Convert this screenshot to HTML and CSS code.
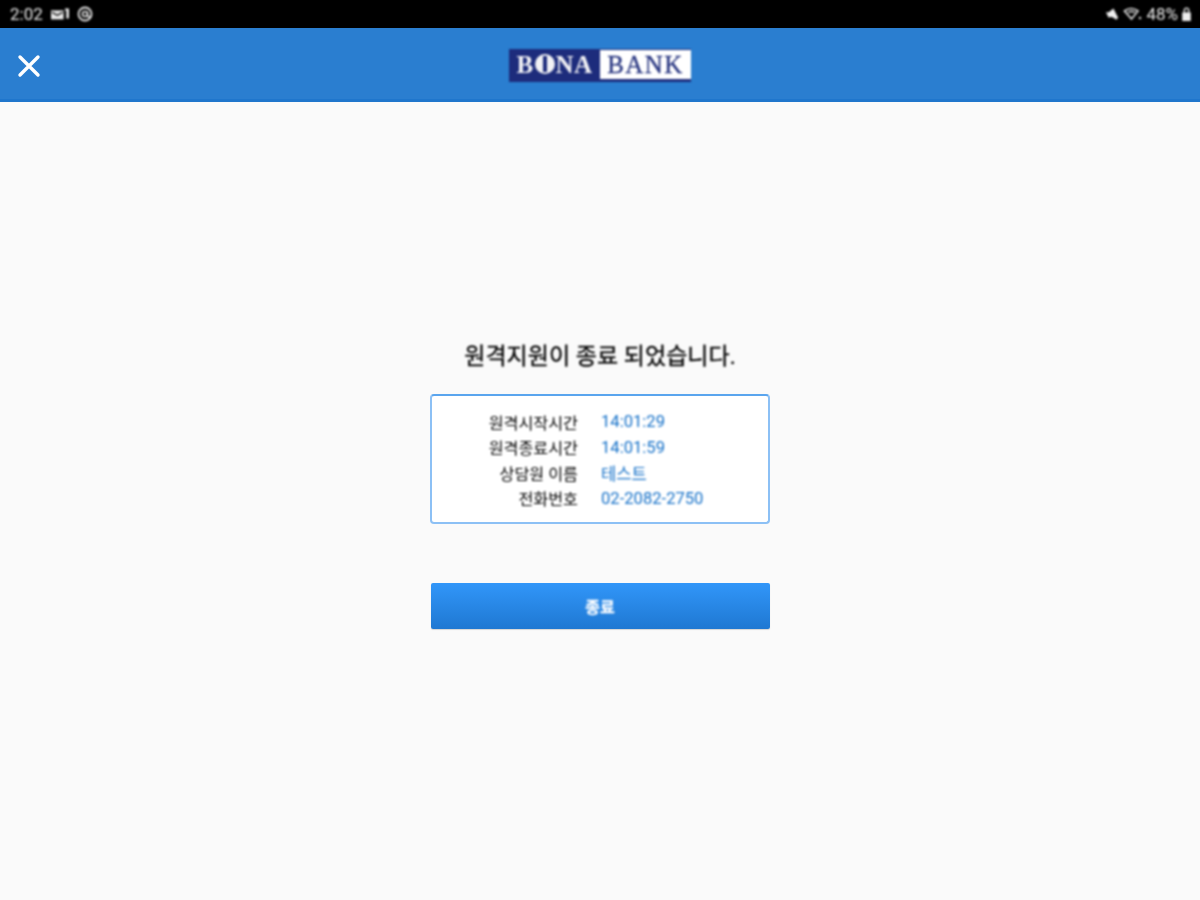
FILE: index.html
```html
<!DOCTYPE html>
<html lang="ko">
<head>
<meta charset="utf-8">
<title>BONA BANK</title>
<link rel="stylesheet" href="styles.css">
</head>
<body>
<div class="status">
  <div class="status-group">
    <span class="time">2:02</span>
    <svg class="ic-mail" viewBox="0 0 20 14" width="18" height="14"><path fill="#e8e8e8" d="M0 3h14v10H0z"/><path fill="none" stroke="#000" stroke-width="1.4" d="M1 5l6 3.5L13 5"/><path fill="#e8e8e8" d="M15.500 1H20v11h-3V3h-1.500z"/></svg>
    <svg class="ic-at" viewBox="0 0 16 16" width="16" height="16"><circle cx="8" cy="8" r="6.500" fill="none" stroke="#e8e8e8" stroke-width="1.800"/><circle cx="8" cy="8" r="2.500" fill="none" stroke="#e8e8e8" stroke-width="1.600"/><path d="M10.500 5.500v4q0 2 3.500 1" fill="none" stroke="#e8e8e8" stroke-width="1.500"/></svg>
  </div>
  <div class="status-group right">
    <svg viewBox="0 0 16 14" width="15" height="14"><path fill="#f0f0f0" d="M1 5h3l5-4 5 10-2 2-3-2-3-1-2 1-1-2z"/></svg>
    <svg viewBox="0 0 20 14" width="20" height="14"><path fill="none" stroke="#e0e0e0" stroke-width="1.600" d="M1.500 4Q8-1 15 4L8.500 12z"/><path fill="none" stroke="#e0e0e0" stroke-width="1.300" d="M5 5.500Q8.500 3.500 12 5.500"/><circle cx="17" cy="11" r="1.300" fill="#ccc"/></svg>
    <span class="batt-text">48%</span>
    <svg viewBox="0 0 10 13" width="11" height="14"><path fill="#eee" d="M1 5h8v8H1z"/><path fill="none" stroke="#eee" stroke-width="1.300" d="M3 5V3a2 2 0 0 1 4 0v2"/></svg>
  </div>
</div>
<header class="appbar">
  <svg class="close" viewBox="0 0 24 24" width="24" height="24"><path stroke="#fff" stroke-width="3.400" stroke-linecap="round" d="M3 3l18 18M21 3L3 21"/></svg>
  <div class="logo">
    <span class="logo-dark">B<span class="logo-o"><i></i></span>NA</span>
    <span class="logo-light">BANK</span>
  </div>
</header>
<main class="content">
  <h1 class="title">원격지원이 종료 되었습니다.</h1>
  <section class="card">
    <div class="row"><span class="label">원격시작시간</span><span class="value">14:01:29</span></div>
    <div class="row"><span class="label">원격종료시간</span><span class="value">14:01:59</span></div>
    <div class="row"><span class="label">상담원 이름</span><span class="value">테스트</span></div>
    <div class="row"><span class="label">전화번호</span><span class="value">02-2082-2750</span></div>
  </section>
  <button class="btn"><span class="btn-label">종료</span></button>
</main>
</body>
</html>
```
FILE: styles.css
```css
* { box-sizing: border-box; }
html, body { margin: 0; height: 100%; }
body {
  width: 1200px; height: 900px; overflow: hidden;
  background: #fafafa;
  font-family: "Roboto", "Noto Sans CJK KR", sans-serif;
  display: flex; flex-direction: column;
}
.status {
  height: 28px; background: #000; color: #e8e8e8;
  display: flex; justify-content: space-between; align-items: center;
  padding: 0 8px 0 10px; font-size: 17px;
}
.status-group { display: flex; align-items: center; gap: 8px; filter: blur(.8px); }
.status-group.right { gap: 3px; }
.appbar {
  height: 74px; background: #2a7ed0; border-bottom: 3px solid #1f76cc;
  display: flex; align-items: center; justify-content: center;
  padding-top: 3px;
}
.close { position: absolute; left: 17px; top: 54px; }
.logo {
  width: 182px; height: 33px; background: #1d2c7c;
  display: flex; padding: 1px 0 3px 0;
  font-family: "Liberation Serif", serif; font-size: 25px; line-height: 29px;
  filter: blur(.8px);
}
.logo-dark { width: 91px; color: #f2f2f5; display: flex; justify-content: center; align-items: center; letter-spacing: .4px; font-weight: 700; }
.logo-light { flex: 1; background: #fff; color: #25337f; text-align: center; letter-spacing: 1.400px; font-weight: 400; -webkit-text-stroke: .3px #25337f; }
.logo-o {
  width: 20px; height: 20px; border-radius: 50%; background: #f2f2f5; position: relative; display: inline-block; margin: 0 1px;
}
.logo-o i { position: absolute; left: 8px; top: 2px; width: 4px; height: 16px; background: #1d2c7c; }
.content {
  flex: 1; display: flex; flex-direction: column; align-items: center;
  padding-top: 240px;
}
.title {
  margin: 0; font-size: 23px; font-weight: 400; line-height: 30px; color: #000;
  -webkit-text-stroke: .3px #000;
  filter: blur(.8px);
}
.card {
  margin-top: 22px; width: 340px; height: 130px;
  background: #fff; border: 2px solid #8cc0f5; border-top-color: #5aa5ee; border-radius: 4px;
  padding-top: 13px;
}
.row {
  display: grid; grid-template-columns: 146px 1fr; column-gap: 23px;
  height: 25.500px; align-items: center; filter: blur(.8px);
}
.label { text-align: right; color: #000; font-size: 16.200px; }
.value { color: #1470c8; font-size: 16.600px; }
.btn {
  margin-top: 59px; width: 339px; height: 46px; border: 0; border-radius: 2px;
  background: linear-gradient(#3196f9, #1f78d2);
  color: #fff; font-family: inherit; font-size: 16px; font-weight: 700;
  box-shadow: 0 1px 1px rgba(0,0,0,.15);
}
.btn-label { display: block; -webkit-text-stroke: .3px #fff; filter: blur(.8px); }
```
